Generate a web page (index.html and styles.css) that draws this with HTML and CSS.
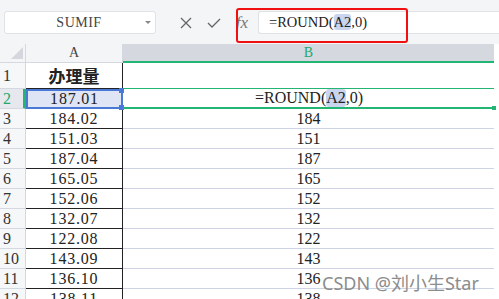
FILE: index.html
```html
<!DOCTYPE html>
<html>
<head>
    <title>ROUND</title>
    <link rel="stylesheet" href="styles.css">
</head>
<body>
    <div class="toolbar">
        <div class="namebox">
            <span class="name">SUMIF</span>
            <span class="caret"></span>
        </div>
        <div class="tool">
            <svg width="12" height="12" viewBox="0 0 12 12"><path d="M1 1 L11 11 M11 1 L1 11" stroke="#666" stroke-width="1.3" fill="none"/></svg>
        </div>
        <div class="tool">
            <svg width="14" height="10" viewBox="0 0 14 10"><path d="M1 5 L5 9 L13 1" stroke="#666" stroke-width="1.3" fill="none"/></svg>
        </div>
        <div class="tool fx">fx</div>
        <div class="formula">=ROUND(<span class="ref">A2</span>,0)</div>
        <div class="mark"></div>
    </div>

    <div class="sheet">
        <div class="row head">
            <div class="rn corner">
                <svg width="12" height="12" viewBox="0 0 12 12"><path d="M12 0 L12 12 L0 12 Z" fill="#d4d7dd"/></svg>
            </div>
            <div class="ca">A</div>
            <div class="cb">B</div>
        </div>
        <div class="row r1">
            <div class="rn">1</div>
            <div class="ca title">办理量</div>
            <div class="cb"></div>
        </div>
        <div class="row active">
            <div class="rn">2</div>
            <div class="ca sel">187.01</div>
            <div class="cb edit">=ROUND(<span class="ref">A2</span>,0)</div>
        </div>
        <div class="row"><div class="rn">3</div><div class="ca">184.02</div><div class="cb">184</div></div>
        <div class="row"><div class="rn">4</div><div class="ca">151.03</div><div class="cb">151</div></div>
        <div class="row"><div class="rn">5</div><div class="ca">187.04</div><div class="cb">187</div></div>
        <div class="row"><div class="rn">6</div><div class="ca">165.05</div><div class="cb">165</div></div>
        <div class="row"><div class="rn">7</div><div class="ca">152.06</div><div class="cb">152</div></div>
        <div class="row"><div class="rn">8</div><div class="ca">132.07</div><div class="cb">132</div></div>
        <div class="row"><div class="rn">9</div><div class="ca">122.08</div><div class="cb">122</div></div>
        <div class="row"><div class="rn">10</div><div class="ca">143.09</div><div class="cb">143</div></div>
        <div class="row"><div class="rn">11</div><div class="ca">136.10</div><div class="cb">136</div></div>
        <div class="row"><div class="rn">12</div><div class="ca">138.11</div><div class="cb">138</div></div>
    </div>

    <div class="watermark">CSDN @刘小生Star</div>
</body>
</html>
```

FILE: styles.css
```css
body {
    margin: 0;
    width: 499px;
    height: 299px;
    overflow: hidden;
    background: #fff;
    font-family: "Liberation Serif", serif;
    color: #222;
    position: relative;
}
.toolbar {
    height: 44px;
    box-sizing: border-box;
    padding: 11px 0 0 4px;
    background: #f4f5f7;
    display: flex;
    align-items: flex-start;
    position: relative;
}
.namebox {
    width: 152px;
    height: 23px;
    box-sizing: border-box;
    background: #fff;
    border: 1px solid #e0e2e6;
    border-radius: 3px;
    display: flex;
    align-items: center;
    margin-right: 16px;
}
.name {
    flex: 1;
    text-align: center;
    font-size: 14px;
    color: #444;
    letter-spacing: 0.5px;
    padding-left: 8px;
}
.caret {
    width: 0;
    height: 0;
    border-left: 3px solid transparent;
    border-right: 3px solid transparent;
    border-top: 3px solid #888;
    margin-right: 4px;
}
.tool {
    width: 28px;
    height: 23px;
    display: flex;
    align-items: center;
    justify-content: center;
}
.fx {
    font-style: italic;
    font-size: 17px;
    color: #777;
    font-family: "Liberation Serif", serif;
}
.formula {
    margin-left: 2px;
    flex: 1;
    height: 23px;
    box-sizing: border-box;
    background: #fff;
    border: 1px solid #e0e2e6;
    border-right: none;
    border-radius: 3px 0 0 3px;
    font-size: 14.5px;
    line-height: 21px;
    padding-left: 10px;
    color: #222;
}
.ref {
    background: #c9d5ee;
    border-radius: 3px;
}
.mark {
    position: absolute;
    left: 236px;
    top: 8px;
    width: 172px;
    height: 35px;
    box-sizing: border-box;
    border: 2px solid #f01010;
    border-radius: 3px;
}
.sheet {
    display: flex;
    flex-direction: column;
}
.row {
    display: flex;
    height: 20px;
}
.row > div {
    box-sizing: border-box;
    height: 100%;
    display: flex;
    align-items: center;
    font-size: 16px;
}
.rn {
    width: 26px;
    padding-left: 3px;
    background: #f6f7f9;
    border-right: 1px solid #d4d8e0;
    border-bottom: 1px solid #d4d8e0;
    color: #333;
}
.ca {
    width: 97px;
    justify-content: center;
    border-right: 1px solid #222;
    border-bottom: 1px solid #222;
    letter-spacing: 0.8px;
}
.cb {
    width: 371px;
    justify-content: center;
    border-bottom: 1px solid #cdd4e4;
}
.head {
    height: 19px;
}
.head .corner {
    justify-content: flex-end;
    align-items: flex-end;
    padding: 0 2px 3px 0;
    background: #f4f5f7;
}
.head .ca {
    background: #f4f5f7;
    border-right: 1px solid #d4d8e0;
    border-bottom: 1px solid #d4d8e0;
    font-size: 14px;
    color: #444;
    letter-spacing: 0;
}
.head .cb {
    background: #d5d8df;
    border-bottom: 2px solid #22b573;
    font-size: 14px;
    color: #22a86b;
}
.r1 {
    height: 26px;
}
.r1 .cb {
    border-bottom: 1px solid #22b573;
}
.title {
    font-family: "Noto Sans CJK SC", sans-serif;
    font-weight: bold;
    font-size: 17px !important;
    letter-spacing: 0 !important;
}
.active .rn {
    background: #e6e8ee;
    color: #22a86b;
    border-right: 3px solid #22b573;
}
.sel {
    background: #dfe5f4;
    border: 2px solid #4a78d6 !important;
    border-left-width: 2px;
    position: relative;
}
.sel::before,
.sel::after {
    content: "";
    position: absolute;
    width: 5px;
    height: 5px;
    background: #4a78d6;
    right: -3px;
}
.sel::before {
    top: -3px;
}
.sel::after {
    bottom: -3px;
}
.edit {
    border-bottom: 2px solid #22b573 !important;
    position: relative;
    justify-content: flex-start !important;
    padding-left: 132px;
}
.edit::after {
    content: "";
    position: absolute;
    right: -2px;
    bottom: -3px;
    width: 4px;
    height: 4px;
    background: #22b573;
}
.watermark {
    position: absolute;
    left: 322px;
    top: 269px;
    font-family: "Noto Sans", "Noto Sans CJK SC", sans-serif;
    font-size: 18px;
    color: #8c8c8c;
    white-space: nowrap;
}
```
